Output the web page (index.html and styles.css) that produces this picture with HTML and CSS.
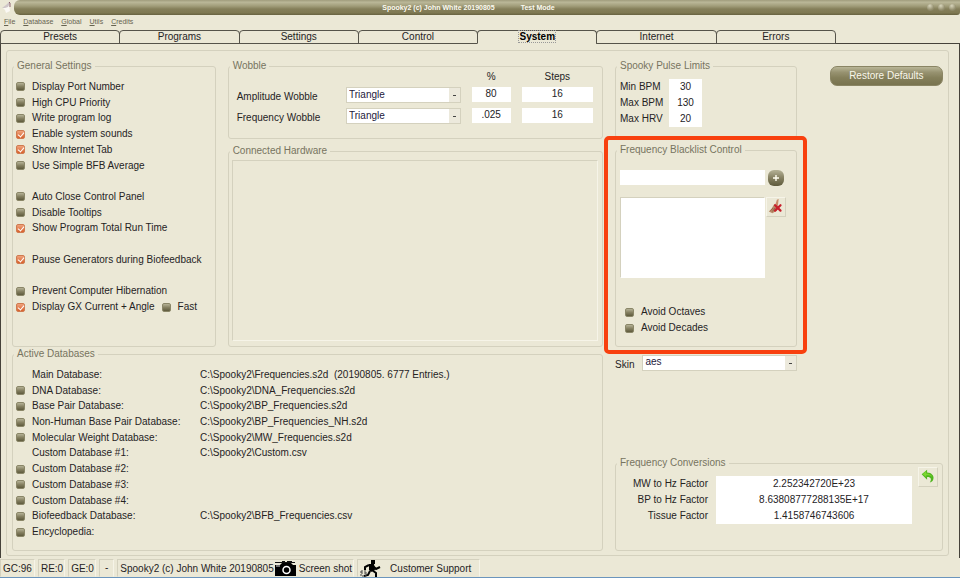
FILE: index.html
```html
<!DOCTYPE html>
<html lang="en">
<head>
<meta charset="utf-8">
<title>Spooky2</title>
<link rel="stylesheet" href="styles.css">
</head>
<body>
<header class="titlebar">
  <svg class="app-icon" viewBox="0 0 14 14" aria-hidden="true"><path d="M3 8l6-3 1 6-4 2-1-3z" fill="#fbf9f4"/><path d="M2 8l4-3 3-3 1 1-2 4-3 1z" fill="#cfc6c8"/><path d="M9 2l1 1v4" stroke="#8d6270" fill="none"/></svg>
  <div class="title">
    <span class="title-text"><span>Spooky2 (c) John White 20190805</span><span>Test Mode</span></span>
    <button class="win" aria-label="Minimize"></button>
    <button class="win" aria-label="Maximize"></button>
    <button class="win" aria-label="Close"></button>
  </div>
</header>
<nav class="menu">
  <a href="#"><u>F</u>ile</a><a href="#"><u>D</u>atabase</a><a href="#"><u>G</u>lobal</a><a href="#"><u>U</u>tils</a><a href="#"><u>C</u>redits</a>
</nav>
<div class="tabs" role="tablist">
  <button class="tab" role="tab">Presets</button>
  <button class="tab" role="tab">Programs</button>
  <button class="tab" role="tab">Settings</button>
  <button class="tab" role="tab">Control</button>
  <button class="tab active" role="tab" aria-selected="true"><span>System</span></button>
  <button class="tab" role="tab">Internet</button>
  <button class="tab" role="tab">Errors</button>
</div>
<main class="panel">
  <div class="frame">
    <div class="left">
      <div class="upper">
        <fieldset>
          <legend>General Settings</legend>
          <div class="checks general">
            <label><input type="checkbox">Display Port Number</label>
            <label><input type="checkbox">High CPU Priority</label>
            <label><input type="checkbox">Write program log</label>
            <label><input type="checkbox" checked>Enable system sounds</label>
            <label><input type="checkbox" checked>Show Internet Tab</label>
            <label><input type="checkbox">Use Simple BFB Average</label>
            <span></span>
            <label><input type="checkbox">Auto Close Control Panel</label>
            <label><input type="checkbox">Disable Tooltips</label>
            <label><input type="checkbox" checked>Show Program Total Run Time</label>
            <span></span>
            <label><input type="checkbox" checked>Pause Generators during Biofeedback</label>
            <span></span>
            <label><input type="checkbox">Prevent Computer Hibernation</label>
            <div class="pair">
              <label><input type="checkbox" checked>Display GX Current + Angle</label>
              <label><input type="checkbox">Fast</label>
            </div>
          </div>
        </fieldset>
        <div class="middle">
          <fieldset>
            <legend>Wobble</legend>
            <div class="wobble">
              <span></span><span></span><span class="head">%</span><span class="head">Steps</span>
              <label for="aw">Amplitude Wobble</label>
              <select id="aw"><option>Triangle</option></select>
              <input class="value" aria-label="Amplitude percent" value="80">
              <input class="value" aria-label="Amplitude steps" value="16">
              <label for="fw">Frequency Wobble</label>
              <select id="fw"><option>Triangle</option></select>
              <input class="value" aria-label="Frequency percent" value=".025">
              <input class="value" aria-label="Frequency steps" value="16">
            </div>
          </fieldset>
          <fieldset class="hardware">
            <legend>Connected Hardware</legend>
            <div class="well"></div>
          </fieldset>
        </div>
      </div>
      <fieldset class="databases">
        <legend>Active Databases</legend>
        <div class="checks db">
          <div class="row"><span class="nobox">Main Database:</span><span>C:\Spooky2\Frequencies.s2d&nbsp; (20190805. 6777 Entries.)</span></div>
          <div class="row"><label><input type="checkbox">DNA Database:</label><span>C:\Spooky2\DNA_Frequencies.s2d</span></div>
          <div class="row"><label><input type="checkbox">Base Pair Database:</label><span>C:\Spooky2\BP_Frequencies.s2d</span></div>
          <div class="row"><label><input type="checkbox">Non-Human Base Pair Database:</label><span>C:\Spooky2\BP_Frequencies_NH.s2d</span></div>
          <div class="row"><label><input type="checkbox">Molecular Weight Database:</label><span>C:\Spooky2\MW_Frequencies.s2d</span></div>
          <div class="row"><span class="nobox">Custom Database #1:</span><span>C:\Spooky2\Custom.csv</span></div>
          <div class="row"><label><input type="checkbox">Custom Database #2:</label></div>
          <div class="row"><label><input type="checkbox">Custom Database #3:</label></div>
          <div class="row"><label><input type="checkbox">Custom Database #4:</label></div>
          <div class="row"><label><input type="checkbox">Biofeedback Database:</label><span>C:\Spooky2\BFB_Frequencies.csv</span></div>
          <div class="row"><label><input type="checkbox">Encyclopedia:</label></div>
        </div>
      </fieldset>
    </div>
    <div class="right">
      <div class="right-top">
        <div class="narrow">
          <fieldset>
            <legend>Spooky Pulse Limits</legend>
            <div class="pulse">
              <label for="minb">Min BPM</label><input class="value" id="minb" value="30">
              <label for="maxb">Max BPM</label><input class="value" id="maxb" value="130">
              <label for="maxh">Max HRV</label><input class="value" id="maxh" value="20">
            </div>
          </fieldset>
          <div class="highlight">
            <fieldset>
              <legend>Frequency Blacklist Control</legend>
              <div class="blacklist">
                <input class="value" aria-label="Frequency">
                <button class="add" aria-label="Add frequency"><svg viewBox="0 0 16 16"><path d="M8 5v6M5 8h6" stroke="#fffef0" stroke-width="1.400"/></svg></button>
                <textarea aria-label="Blacklisted frequencies"></textarea>
                <button class="tool" aria-label="Clear blacklist"><svg viewBox="0 0 20 20"><path d="M11 2l2-1-1 8-3-1z" fill="#c98b6a"/><path d="M8 7l4 2-1 5-5 3-4-2 3-3z" fill="#b98a68"/><path d="M4 14l3-3M6 15l3-4M8 8l3 2" stroke="#8e5d45" fill="none"/><path d="M9 8l6 6M15 8l-6 6" stroke="#c8202c" stroke-width="2.500" stroke-linecap="round"/></svg></button>
              </div>
              <div class="avoid">
                <label><input type="checkbox">Avoid Octaves</label>
                <label><input type="checkbox">Avoid Decades</label>
              </div>
            </fieldset>
          </div>
          <div class="skin"><label for="skin">Skin</label><select id="skin"><option>aes</option></select></div>
        </div>
        <button class="restore">Restore Defaults</button>
      </div>
      <fieldset class="conversions">
        <legend>Frequency Conversions</legend>
        <div class="convert">
          <div class="factors">
            <label for="mw">MW to Hz Factor</label><input class="value" id="mw" value="2.252342720E+23">
            <label for="bp">BP to Hz Factor</label><input class="value" id="bp" value="8.63808777288135E+17">
            <label for="tf">Tissue Factor</label><input class="value" id="tf" value="1.4158746743606">
          </div>
          <button class="tool undo" aria-label="Reset factors"><svg viewBox="0 0 20 20"><path d="M3 7l6-5v3c5 0 8 4 7 7 0 2-2 4-4 4 2-3 2-6-3-6v3z" fill="#4fb51e"/><path d="M4 7l4-4v3c4 0 6 2 7 4-2-2-4-2-7-2v2z" fill="#7bd62f"/></svg></button>
        </div>
      </fieldset>
    </div>
  </div>
</main>
<footer class="status">
  <span class="cell wide">GC:96</span>
  <span class="cell">RE:0</span>
  <span class="cell">GE:0</span>
  <span class="cell dash">-</span>
  <span class="cell shot">Spooky2 (c) John White 20190805
    <button class="link"><svg class="camera" viewBox="0 0 21 16"><path d="M0 1h20v1H0zM7 0h3v1H7zM12 0h5v1h-5z" fill="#111"/><path d="M0 4h5l2-2h9l2 2h3v11H0z" fill="#000"/><circle cx="11.500" cy="9" r="3.500" fill="none" stroke="#fff" stroke-width="1.500"/><path d="M1 5h4" stroke="#ddd"/></svg>Screen shot</button>
  </span>
  <span class="cell last"><button class="link support"><svg class="runner" viewBox="0 0 22 18"><path d="M11 0h4v4h-4z" fill="#000"/><path d="M9 5L5 7v3M13 6l3 3 4-2M12 10l4 3v4M10 11l-2 4-4 1" fill="none" stroke="#000" stroke-width="2"/><path d="M9 4h5l1 6-4 2-2-2z" fill="#000"/><path d="M1 11h5v5H1zM1 13h5" fill="none" stroke="#444" stroke-dasharray="2 1"/></svg>Customer Support</button></span>
</footer>
</body>
</html>
```

FILE: styles.css
```css
:root {
  --bg: #ebe8d6;
  --line: #d4d1be;
  --light: #f6f4e8;
  --ink: #25231f;
  --muted: #77745f;
}
* { box-sizing: border-box; }
body {
  margin: 0;
  min-height: 100vh;
  display: flex;
  flex-direction: column;
  background: var(--bg);
  color: var(--ink);
  font: 10px/12px "Liberation Sans", Arial, sans-serif;
  border-bottom: 1px solid #6b95bd;
}
button, input, select, textarea {
  font: inherit;
  color: inherit;
  margin: 0;
  padding: 0;
  border: 0;
  border-radius: 0;
  background: none;
  min-width: 0;
}
svg { display: block; }

.titlebar { display: flex; height: 15px; }
.app-icon { width: 14px; height: 14px; }
.title {
  flex: 1;
  display: flex;
  align-items: center;
  gap: 4px;
  padding-right: 4px;
  border-radius: 6px 0 3px 6px;
  background: linear-gradient(#a09c7c, #bab798 15%, #a19d7a 40%, #857f5a 60%, #7f7953 85%, #676240);
  color: #fbfaf0;
  font-size: 7px;
  font-weight: bold;
}
.title-text { flex: 1; display: flex; justify-content: center; gap: 26px; }
.win {
  width: 7px;
  height: 7px;
  border-radius: 4px;
  background: radial-gradient(circle at 40% 25%, #d8d5bc, #959070 60%, #7b7652);
}
.menu { display: flex; gap: 8px; padding: 1px 4px 2px; font-size: 7px; }
.menu a { color: #66634f; text-decoration: none; }

.tabs {
  display: flex;
  position: relative;
  z-index: 1;
  margin-bottom: -1px;
  padding-right: 124px;
}
.tab {
  flex: 1;
  height: 14px;
  margin-left: -1px;
  border: 1px solid #55534a;
  border-radius: 4px 4px 0 0;
  line-height: 12px;
}
.tab:first-child { margin-left: 0; }
.tab.active { border-bottom-color: var(--bg); font-weight: bold; color: #000; }
.tab.active span { outline: 1px dotted #999; }

.panel {
  flex: 1;
  display: flex;
  border: solid #45423a;
  border-width: 1px 1px 0;
  padding: 6px 10px 2px 5px;
}
.frame {
  flex: 1;
  display: grid;
  grid-template-columns: 591fr 328fr;
  gap: 12px;
  padding: 9px 5px 4px;
  border: 1px solid var(--line);
  border-radius: 3px;
}
fieldset {
  margin: 0;
  min-width: 0;
  padding: 0 1px;
  border: 1px solid var(--line);
  border-radius: 3px;
}
legend { padding: 0 3px; color: var(--muted); line-height: 12px; }

.left, .right, .middle, .narrow { display: flex; flex-direction: column; min-width: 0; }
.upper { display: grid; grid-template-columns: 204fr 376fr; gap: 12px; }
.checks { display: grid; grid-auto-rows: 1fr; padding-left: 2px; white-space: nowrap; }
.checks label, .avoid label { display: flex; align-items: center; gap: 7px; }
.general { min-height: 236px; margin: 7px 0 31px; }
.pair { display: flex; gap: 7px; }

input[type="checkbox"] {
  appearance: none;
  flex: none;
  width: 9px;
  height: 9px;
  border: 1px solid #8a8668;
  border-radius: 2px;
  background: linear-gradient(#b5b296, #858061 50%, #5f5b3d);
}
input[type="checkbox"]:checked {
  border-color: #cf7a50;
  background: linear-gradient(#f0a27c, #d8622c);
}
input[type="checkbox"]:checked::before {
  content: "";
  display: block;
  width: 3px;
  height: 5px;
  margin-left: 2px;
  border: solid #fff;
  border-width: 0 1px 1px 0;
  transform: rotate(40deg);
}

.middle { gap: 6px; }
.wobble {
  display: grid;
  grid-template-columns: 98fr 114fr 39fr 71fr;
  grid-template-rows: 10px;
  grid-auto-rows: 16px;
  row-gap: 5px;
  column-gap: 11px;
  padding: 0 8px 14px 7px;
}
.wobble label { align-self: end; white-space: nowrap; }
.head { text-align: center; line-height: 10px; }
.value { width: 100%; background: #fff; text-align: center; }
.wobble .value { height: 15px; padding-bottom: 3px; }
select {
  appearance: none;
  width: 100%;
  height: 16px;
  padding: 0 14px 1px 2px;
  border: 1px solid var(--line);
  background:
    linear-gradient(#444, #444) right 4px center / 3px 1px no-repeat,
    linear-gradient(#ece9dc, #ece9dc) right / 11px 100% no-repeat,
    #fff;
  color: #24203c;
}
.hardware { flex: 1; display: flex; flex-direction: column; }
.well {
  flex: 1;
  margin: 3px 3px 5px 2px;
  border: 1px solid;
  border-color: var(--line) var(--light) var(--light) var(--line);
}
.databases { margin-top: 1px; flex: 1; }
.db { min-height: 173px; margin-top: 7px; }
.row { display: grid; grid-template-columns: 184px 1fr; align-items: center; }
.nobox { padding-left: 16px; }

.right { justify-content: space-between; }
.right-top { display: flex; align-items: flex-start; gap: 33px; }
.narrow { flex: 183; gap: 6px; }
.restore {
  flex: 112;
  height: 20px;
  margin-top: 6px;
  border: 1px solid #8a8564;
  border-radius: 7px;
  background: linear-gradient(#b9b697, #979270 30%, #847f5a 60%, #78734f);
  color: #f8f7ea;
}
.pulse {
  display: grid;
  grid-template-columns: 40px 33px;
  grid-auto-rows: 16px;
  align-items: center;
  column-gap: 9px;
  padding: 7px 3px 10px;
  white-space: nowrap;
}
.pulse .value, .factors .value { height: 100%; }
.pulse .value, .factors .value { padding-bottom: 1px; }
.highlight { position: relative; }
.highlight::after {
  content: "";
  position: absolute;
  inset: -8px -10px -7px -11px;
  border: 4px solid #f8400f;
  border-radius: 5px;
  pointer-events: none;
}
.blacklist {
  display: grid;
  grid-template-columns: 1fr 20px;
  grid-template-rows: 15px 81px;
  row-gap: 12px;
  column-gap: 1px;
  padding: 14px 9px 0 3px;
}
.add {
  place-self: center;
  width: 16px;
  height: 16px;
  border-radius: 6px;
  background: linear-gradient(#b5b296, #858061 50%, #5f5b3d);
}
textarea {
  width: 100%;
  height: 100%;
  background: #fff;
  border: 1px solid;
  border-color: var(--line) #fff #fff var(--line);
  resize: none;
}
.tool {
  width: 20px;
  height: 20px;
  border: 1px solid;
  border-color: var(--light) var(--line) var(--line) var(--light);
}
.avoid { display: grid; grid-auto-rows: 16px; padding: 26px 8px 10px; }
.skin { display: flex; gap: 8px; margin-top: 2px; align-items: flex-end; }
.skin select { flex: 1; }
.skin select { padding-bottom: 2px; }

.convert { display: flex; gap: 6px; padding: 0 3px; }
.undo { margin-top: -2px; }
.factors {
  flex: 1;
  display: grid;
  grid-template-columns: 88px 1fr;
  grid-auto-rows: 16px;
  align-items: center;
  column-gap: 8px;
  padding: 7px 0 26px;
}
.factors label { text-align: right; }

.status { display: flex; gap: 3px; padding-top: 1px; white-space: nowrap; }
.cell {
  display: flex;
  align-items: center;
  gap: 3px;
  height: 18px;
  padding: 2px 1px 0 2px;
  border: 1px solid;
  border-color: var(--line) var(--light) transparent var(--line);
}
.wide { padding-right: 2px; }
.dash { padding: 0 5px; }
.shot { gap: 1px; }
.last { padding-right: 8px; }
.link { display: flex; align-items: center; gap: 3px; }
.support { gap: 8px; }
.camera { width: 21px; height: 16px; }
.runner { width: 22px; height: 18px; }
```
